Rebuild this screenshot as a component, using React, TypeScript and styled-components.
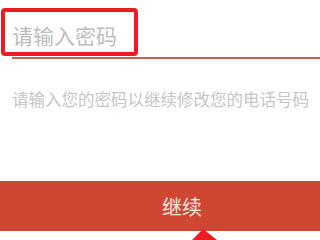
import React from 'react';
import styled, { createGlobalStyle } from 'styled-components';

const GlobalStyle = createGlobalStyle`
  html, body {
    margin: 0;
    padding: 0;
    background: #ffffff;
  }
  body {
    font-family: "Noto Sans CJK SC", "Noto Sans", sans-serif;
  }
`;

const Page = styled.div`
  position: relative;
  width: 320px;
  height: 240px;
  overflow: hidden;
  display: flex;
  flex-direction: column;
  background: #ffffff;
`;

const FieldRow = styled.div`
  margin-left: 12px;
  height: 59px;
  border-bottom: 2px solid #c95f4d;
  display: flex;
  align-items: flex-end;
  box-sizing: border-box;
  padding-bottom: 8px;
`;

const PasswordInput = styled.input`
  border: none;
  outline: none;
  background: transparent;
  padding: 0;
  width: 100%;
  font-family: "Noto Sans CJK SC", sans-serif;
  font-size: 21px;
  line-height: 28px;
  color: #333;

  &::placeholder {
    color: #bdbdbd;
  }
`;

const Hint = styled.p`
  margin: 29px 0 0 12px;
  font-size: 16.5px;
  line-height: 22px;
  color: #c6c6c6;
  white-space: nowrap;
`;

const ContinueButton = styled.button`
  margin-top: 71px;
  width: 100%;
  height: 50px;
  border: none;
  background: #cf4632;
  color: #fbe8e3;
  font-family: "Noto Sans CJK SC", sans-serif;
  font-size: 20px;
  padding: 0 0 0 44px;
  cursor: pointer;
`;

// annotation overlays
const Highlight = styled.div`
  position: absolute;
  left: 1px;
  top: 8px;
  width: 137px;
  height: 48px;
  box-sizing: border-box;
  border: 4px solid #ee1b23;
  border-radius: 4px;
  pointer-events: none;
`;

const Arrow = styled.svg`
  position: absolute;
  left: 190px;
  top: 227px;
  pointer-events: none;
`;

export default function App() {
  return (
    <>
      <GlobalStyle />
      <Page>
        <FieldRow>
          <PasswordInput type="password" placeholder="请输入密码" />
        </FieldRow>
        <Hint>请输入您的密码以继续修改您的电话号码</Hint>
        <ContinueButton>继续</ContinueButton>
        <Highlight />
        <Arrow width="30" height="13" viewBox="0 0 30 13">
          <polygon points="13,2 27,13 2,13" fill="#ee1b23" />
        </Arrow>
      </Page>
    </>
  );
}
